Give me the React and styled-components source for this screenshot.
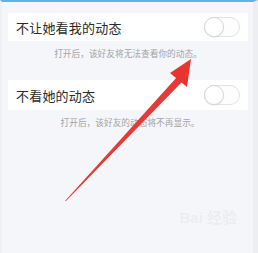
import React from "react";
import styled, { createGlobalStyle } from "styled-components";

const GlobalStyle = createGlobalStyle`
  html, body {
    margin: 0;
    padding: 0;
    background: #f5f6f9;
  }
  body {
    font-family: "Noto Sans CJK SC", "Noto Sans", sans-serif;
  }
`;

const Page = styled.div`
  position: relative;
  width: 258px;
  height: 253px;
  box-sizing: border-box;
  border-top: 2px solid #5cb6e4;
  border-left: 2px solid #eef0f4;
  border-right: 5px solid #eceef2;
  padding: 11px 5px 0 6px;
  overflow: hidden;
`;

const Section = styled.div`
  display: flex;
  flex-direction: column;
  margin-top: ${(p) => p.$top || 0}px;
`;

const Row = styled.div`
  display: flex;
  align-items: center;
  justify-content: space-between;
  height: ${(p) => p.$h}px;
  background: #ffffff;
  padding: 0 8px 0 8px;
`;

const Label = styled.span`
  font-size: 13px;
  color: #2b2b2b;
  letter-spacing: 0.2px;
`;

const Toggle = styled.div`
  position: relative;
  width: 36px;
  height: 20px;
  box-sizing: border-box;
  border: 1px solid #e2e2e2;
  border-radius: 10px;
  background: #fdfdfd;
`;

const Knob = styled.div`
  position: absolute;
  left: -1px;
  top: -1px;
  width: 20px;
  height: 20px;
  box-sizing: border-box;
  border-radius: 50%;
  border: 1px solid #d6d6d6;
  background: #ffffff;
  box-shadow: 0 1px 1px rgba(0, 0, 0, 0.06);
`;

const Hint = styled.div`
  text-align: center;
  font-size: 8.7px;
  color: #a2a4a8;
  padding-top: ${(p) => p.$top}px;
  padding-left: ${(p) => p.$left || 0}px;
`;

const Arrow = styled.svg`
  position: absolute;
  left: 0;
  top: 0;
  pointer-events: none;
`;

const Watermark = styled.div`
  position: absolute;
  right: 16px;
  bottom: 26px;
  font-family: "Liberation Sans", "Noto Sans CJK SC", sans-serif;
  font-size: 15px;
  font-weight: bold;
  color: rgba(215, 215, 218, 0.3);
`;

function Switch() {
  return (
    <Toggle>
      <Knob />
    </Toggle>
  );
}

export default function App() {
  return (
    <>
      <GlobalStyle />
      <Page>
        <Section>
          <Row $h={28}>
            <Label>不让她看我的动态</Label>
            <Switch />
          </Row>
          <Hint $top={6}>打开后，该好友将无法查看你的动态。</Hint>
        </Section>
        <Section $top={20}>
          <Row $h={30}>
            <Label>不看她的动态</Label>
            <Switch />
          </Row>
          <Hint $top={6} $left={4}>打开后，该好友的动态将不再显示。</Hint>
        </Section>
        <Watermark>Bai 经验</Watermark>
        <Arrow width="258" height="253" viewBox="0 0 258 253">
          <polygon points="63,199 64,199 180,80 175,75" fill="#e53a36" />
          <polygon points="189,57 168,71 185,85" fill="#e8332f" />
        </Arrow>
      </Page>
    </>
  );
}
